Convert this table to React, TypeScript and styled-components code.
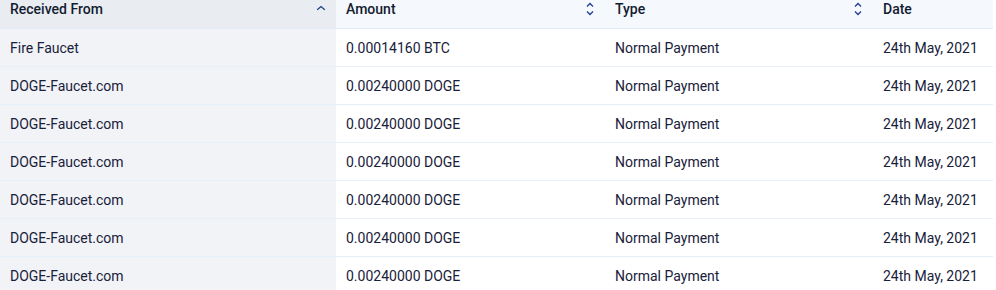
import React from "react";
import styled, { createGlobalStyle } from "styled-components";

type Row = {
  from: string;
  amount: string;
  type: string;
  date: string;
};

const rows: Row[] = [
  { from: "Fire Faucet", amount: "0.00014160 BTC", type: "Normal Payment", date: "24th May, 2021" },
  { from: "DOGE-Faucet.com", amount: "0.00240000 DOGE", type: "Normal Payment", date: "24th May, 2021" },
  { from: "DOGE-Faucet.com", amount: "0.00240000 DOGE", type: "Normal Payment", date: "24th May, 2021" },
  { from: "DOGE-Faucet.com", amount: "0.00240000 DOGE", type: "Normal Payment", date: "24th May, 2021" },
  { from: "DOGE-Faucet.com", amount: "0.00240000 DOGE", type: "Normal Payment", date: "24th May, 2021" },
  { from: "DOGE-Faucet.com", amount: "0.00240000 DOGE", type: "Normal Payment", date: "24th May, 2021" },
  { from: "DOGE-Faucet.com", amount: "0.00240000 DOGE", type: "Normal Payment", date: "24th May, 2021" }
];

const GlobalStyle = createGlobalStyle`
  body {
    margin: 0;
    background: #fff;
    font-family: Roboto, "Liberation Sans", sans-serif;
  }
`;

const Table = styled.table`
  width: 993px;
  border-collapse: collapse;
  table-layout: fixed;
  font-size: 14px;
  color: #18213a;
`;

const Head = styled.th<{ $sorted?: boolean }>`
  height: 28px;
  padding: 0 10px;
  text-align: left;
  font-weight: 500;
  color: #131c31;
  background: ${p => (p.$sorted ? "#e9edf2" : "#f5f8fc")};
  border-bottom: 1px solid #e4ecf8;
  vertical-align: top;
  line-height: 18px;
`;

const HeadInner = styled.div`
  display: flex;
  align-items: center;
  justify-content: space-between;
`;

const Cell = styled.td<{ $sorted?: boolean }>`
  height: 37px;
  padding: 0 10px;
  background: ${p => (p.$sorted ? "#f1f3f7" : "#fff")};
  border-bottom: 1px solid #e6eefa;
  white-space: nowrap;
`;

const SortIcon = styled.svg`
  width: 10px;
  height: 14px;
  flex: none;
  margin-right: 0;
`;

const SortUp = () => (
  <SortIcon viewBox="0 0 10 14" style={{ marginTop: -1 }}>
    <path d="M1.2 7.8 L5 4.5 L8.8 7.8" fill="none" stroke="#1d3f8a" strokeWidth="1.3" />
  </SortIcon>
);

const SortBoth = () => (
  <SortIcon viewBox="0 0 10 14">
    <path d="M2 4.5 L5 1.5 L8 4.5" fill="none" stroke="#1d3f8a" strokeWidth="1.3" />
    <path d="M2 9.5 L5 12.5 L8 9.5" fill="none" stroke="#1d3f8a" strokeWidth="1.3" />
  </SortIcon>
);

const App: React.FC = () => (
  <>
    <GlobalStyle />
    <Table>
      <colgroup>
        <col style={{ width: 336 }} />
        <col style={{ width: 269 }} />
        <col style={{ width: 268 }} />
        <col style={{ width: 120 }} />
      </colgroup>
      <thead>
        <tr>
          <Head $sorted>
            <HeadInner>
              Received From
              <SortUp />
            </HeadInner>
          </Head>
          <Head>
            <HeadInner>
              Amount
              <SortBoth />
            </HeadInner>
          </Head>
          <Head>
            <HeadInner>
              Type
              <SortBoth />
            </HeadInner>
          </Head>
          <Head>
            <HeadInner>Date</HeadInner>
          </Head>
        </tr>
      </thead>
      <tbody>
        {rows.map((r, i) => (
          <tr key={i}>
            <Cell $sorted>{r.from}</Cell>
            <Cell>{r.amount}</Cell>
            <Cell>{r.type}</Cell>
            <Cell>{r.date}</Cell>
          </tr>
        ))}
      </tbody>
    </Table>
  </>
);

export default App;
